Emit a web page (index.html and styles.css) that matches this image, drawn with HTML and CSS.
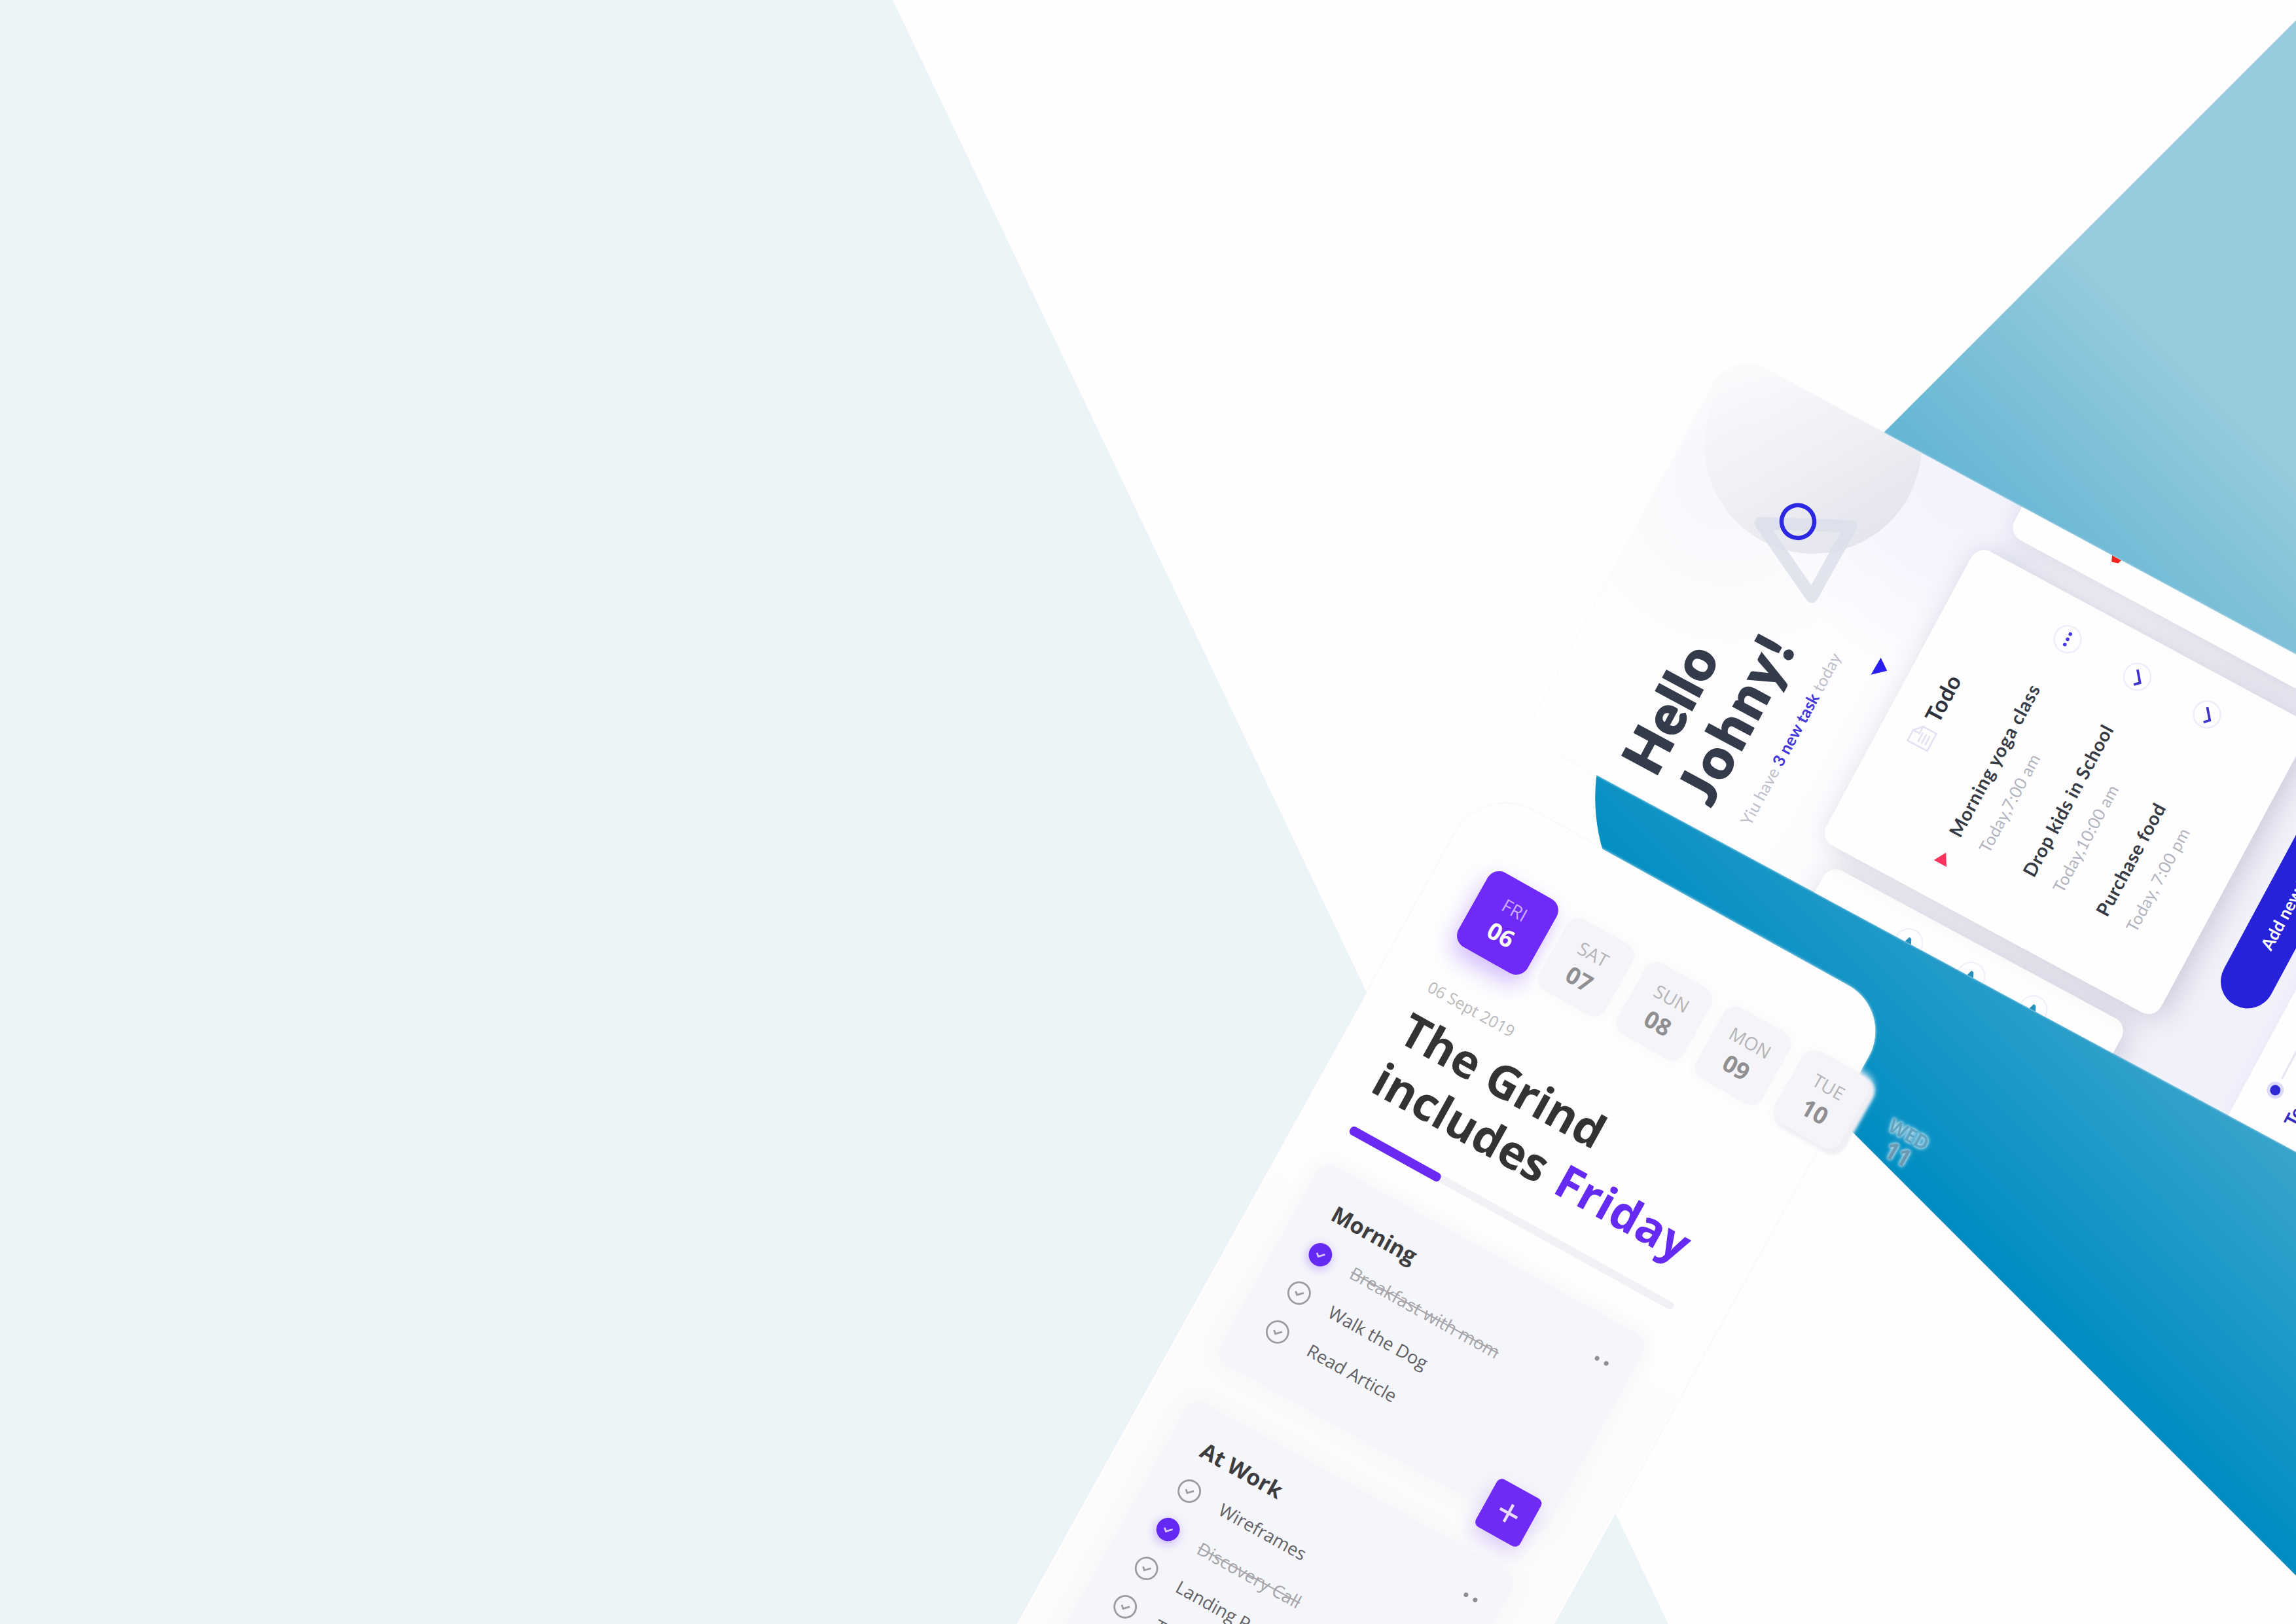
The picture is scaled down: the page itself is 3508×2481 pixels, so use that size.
FILE: index.html
```html
<!DOCTYPE html>
<html lang="en">
<head>
<meta charset="utf-8">
<title>Task planner</title>
<link rel="stylesheet" href="styles.css">
</head>
<body>
<main class="stage">
  <svg class="backdrop" viewBox="0 0 3508 2481" aria-hidden="true">
    <defs>
      <linearGradient id="sea" gradientUnits="userSpaceOnUse" x1="1118" y1="0" x2="1957" y2="-839">
        <stop offset="0" stop-color="#008dc2"/>
        <stop offset="1" stop-color="#98cbdd"/>
      </linearGradient>
    </defs>
    <path fill="#ebf4f7" d="M0 0H1364L2549 2481H0Z"/>
    <path fill="url(#sea)" d="M3508 31L2520 1019A283 283 0 0 0 2520 1419L3508 2407Z"/>
  </svg>

  <section class="phone hello">
    <div class="orb"></div>
    <svg class="shapes" viewBox="0 0 665 460" aria-hidden="true">
      <path d="M455 164L516 288L393 286Z" fill="none" stroke="#dcdfea" stroke-opacity=".85" stroke-width="19" stroke-linejoin="round"/>
      <circle cx="484" cy="213" r="25" fill="none" stroke="#2c27e0" stroke-width="6.5"/>
      <path d="M331 422L361 423L348 441Z" fill="#2a1ff0"/>
    </svg>
    <h1 class="greeting">Hello<br><span class="name">Johny!</span></h1>
    <p class="summary">Yiu have <b>3 new task</b> today</p>

    <div class="deck">
      <article class="sheet side prev">
        <i class="ring"></i><i class="ring"></i><i class="ring"></i>
      </article>
      <article class="sheet todo">
        <header class="todo-head">
          <svg class="doc" viewBox="0 0 34 38" aria-hidden="true">
            <path d="M2 2H20L32 13V36H2Z M20 2V13H32 M8 17H24 M8 23H24 M8 29H24" fill="none" stroke="#e2e2f3" stroke-width="2.6"/>
          </svg>
          <h2>Todo</h2>
        </header>
        <div class="todo-body">
          <ul class="tasks">
            <li>
              <svg class="flag" viewBox="0 0 20 24" aria-hidden="true"><path d="M0 1L19 12L0 23Z" fill="#f8345f"/></svg>
              <strong>Morning yoga class</strong><span class="time">Today,7:00 am</span>
            </li>
            <li><strong>Drop kids in School</strong><span class="time">Today,10:00 am</span></li>
            <li><strong>Purchase food</strong><span class="time">Today, 7:00 pm</span></li>
          </ul>
          <div class="marks">
            <svg viewBox="-22 -22 44 44"><circle r="20.5"/><g class="dot"><circle cx="-9" r="2.8"/><circle r="2.8"/><circle cx="9" r="2.8"/></g></svg>
            <svg viewBox="-22 -22 44 44"><circle r="20.5"/><path d="M-13 1L-6 8L10 -5"/></svg>
            <svg viewBox="-22 -22 44 44"><circle r="20.5"/><path d="M-13 1L-6 8L10 -5"/></svg>
          </div>
        </div>
      </article>
      <article class="sheet side next">
        <svg class="alert" viewBox="0 0 16 20" aria-hidden="true"><path d="M0 6L12 1V19L3 16Z" fill="#f5221b"/></svg>
      </article>
    </div>

    <button class="add">Add new task</button>
    <footer class="timeline">
      <div class="track"><i class="point"></i><i class="line"></i></div>
      <span class="label">Today</span>
    </footer>
  </section>

  <section class="phone grind">
    <nav class="days">
      <div class="day active"><span>FRI</span><b>06</b></div>
      <div class="day"><span>SAT</span><b>07</b></div>
      <div class="day"><span>SUN</span><b>08</b></div>
      <div class="day"><span>MON</span><b>09</b></div>
      <div class="day last"><span>TUE</span><b>10</b></div>
      <div class="day ghost"><span>WED</span><b>11</b></div>
    </nav>
    <p class="date">06 Sept 2019</p>
    <h1 class="headline">The Grind<br>includes <em>Friday</em></h1>
    <div class="progress"><div class="bar"></div></div>

    <article class="group">
      <header><h2>Morning</h2><span class="more"><i></i><i></i></span></header>
      <ul>
        <li class="done"><svg viewBox="-18 -18 36 36"><circle r="16.5"/><path d="M-6 0L-1.5 4L6 -3.5"/></svg><span>Breakfast with mom</span></li>
        <li><svg viewBox="-18 -18 36 36"><circle r="16.5"/><path d="M-6 0L-1.5 4L6 -3.5"/></svg><span>Walk the Dog</span></li>
        <li><svg viewBox="-18 -18 36 36"><circle r="16.5"/><path d="M-6 0L-1.5 4L6 -3.5"/></svg><span>Read Article</span></li>
      </ul>
    </article>
    <article class="group">
      <header><h2>At Work</h2><span class="more"><i></i><i></i></span></header>
      <ul>
        <li><svg viewBox="-18 -18 36 36"><circle r="16.5"/><path d="M-6 0L-1.5 4L6 -3.5"/></svg><span>Wireframes</span></li>
        <li class="done"><svg viewBox="-18 -18 36 36"><circle r="16.5"/><path d="M-6 0L-1.5 4L6 -3.5"/></svg><span>Discovery Call</span></li>
        <li><svg viewBox="-18 -18 36 36"><circle r="16.5"/><path d="M-6 0L-1.5 4L6 -3.5"/></svg><span>Landing Page</span></li>
        <li><svg viewBox="-18 -18 36 36"><circle r="16.5"/><path d="M-6 0L-1.5 4L6 -3.5"/></svg><span>Team</span></li>
      </ul>
    </article>
    <button class="plus" aria-label="Add"><svg viewBox="0 0 36 36"><path d="M18 3V33M3 18H33"/></svg></button>
  </section>
</main>
</body>
</html>
```
FILE: styles.css
```css
* { box-sizing: border-box; margin: 0; padding: 0; }

body { background: #fefefe; }

ul { list-style: none; }

button { border: 0; font: inherit; }

.stage {
  position: relative;
  width: 3508px;
  height: 2481px;
  overflow: hidden;
}

.backdrop { display: block; width: 3508px; height: 2481px; }

.phone { position: absolute; transform-origin: 0 0; }

/* Greeting screen, turned counter-clockwise */
.hello {
  left: 2330px;
  top: 1122px;
  width: 669px;
  height: 1500px;
  padding: 127px 0 0 3px;
  overflow: hidden;
  transform: rotate(-61.7deg) translateX(-3px);
  border-radius: 30px 60px 0 0;
  font-family: Lato, "Liberation Sans", sans-serif;
  background:
    radial-gradient(circle at 660px 400px, #f2f3fd 0, rgba(242, 243, 253, .85) 110px, rgba(242, 243, 253, 0) 300px),
    radial-gradient(circle at 500px 80px, #f7f7fc 0, rgba(248, 248, 253, 0) 280px),
    linear-gradient(180deg, #fefefe 0, #fdfdff 420px, #f8f8fd 700px, #f1f1fa 1060px, #f2f2fd 1200px);
  box-shadow: 0 0 3px #f0f1fa;
}

.orb {
  position: absolute;
  left: 435px;
  top: 12px;
  width: 332px;
  height: 332px;
  border-radius: 50%;
  background: linear-gradient(212deg, rgba(246, 246, 250, 0) 16%, #f2f2f6 46%, #e2e3ec 92%);
}

.shapes { position: absolute; left: 3px; top: 0; width: 665px; height: 460px; }

.greeting {
  position: relative;
  padding-left: 36px;
  font-size: 84px;
  font-weight: 900;
  line-height: 95.5px;
  letter-spacing: 2px;
  color: #343c4b;
  -webkit-text-stroke: 2.5px #343c4b;
}

.name { letter-spacing: 5.6px; }

.summary {
  position: relative;
  margin: 27px 0 97px 39px;
  font-size: 25px;
  line-height: 30px;
  letter-spacing: .25px;
  color: #bdc0ca;
  white-space: nowrap;
}

.summary b { color: #4336dc; }

.deck {
  display: flex;
  align-items: center;
  width: 1594px;
  height: 581px;
  margin-left: -464px;
}

.sheet {
  flex: none;
  width: 510px;
  background: #fefefe;
  border-radius: 22px;
}

.side {
  height: 518px;
  box-shadow: 0 8px 44px rgba(70, 70, 110, .22);
}

.prev {
  display: flex;
  flex-direction: column;
  align-items: flex-end;
  gap: 64px;
  padding: 141px 26px 0 0;
}

.ring {
  display: flex;
  align-items: center;
  justify-content: flex-end;
  width: 44px;
  height: 44px;
  padding-right: 12px;
  border: 2px solid #f0eff9;
  border-radius: 50%;
}

/* Corner of the check mark that peeks past the screen edge */
.ring::after {
  content: "";
  width: 12px;
  height: 13px;
  background: #2590bb;
  clip-path: polygon(0 0, 100% 30%, 90% 60%, 0 100%);
}

.next { padding: 154px 0 0 37px; }

.alert { display: block; width: 16px; height: 20px; }

.todo {
  position: relative;
  height: 581px;
  margin: 0 37px 0 27px;
  padding-top: 44px;
  box-shadow: 0 10px 44px rgba(60, 60, 100, .22);
}

.next { position: relative; }

.todo-head { display: flex; align-items: center; gap: 12px; padding-left: 194px; }

.doc { width: 34px; height: 38px; }

.todo-head h2 { font-size: 34px; line-height: 40px; color: #2c313c; letter-spacing: .5px; }

.todo-body { display: flex; justify-content: space-between; padding: 77px 40px 0 102px; }

.tasks li { position: relative; height: 127.5px; white-space: nowrap; }

.tasks strong {
  display: block;
  font-size: 28.5px;
  line-height: 34px;
  letter-spacing: .75px;
  color: #363b46;
}

.tasks li:first-child strong { letter-spacing: 1.05px; }

.time {
  display: block;
  margin-top: 18px;
  font-size: 25.5px;
  line-height: 32px;
  letter-spacing: .4px;
  color: #b3b5be;
}

.flag { position: absolute; left: -48px; top: 7px; width: 20px; height: 24px; }

.marks { display: flex; flex-direction: column; gap: 77px; padding-top: 6px; }

.marks svg { width: 44px; height: 44px; fill: none; stroke: #f0ecfa; stroke-width: 2.5; }

.marks path { stroke: #4034cc; stroke-width: 3.8; }

.marks .dot { fill: #4438dc; stroke: none; }

.add {
  display: block;
  width: 400px;
  height: 82px;
  margin: 57px 0 0 150px;
  padding-left: 98px;
  border-radius: 41px;
  background: #2721d9;
  color: #fff;
  font-size: 26px;
  font-weight: 700;
  text-align: left;
}

.timeline {
  height: 300px;
  margin: 30px 0 0 -3px;
  padding: 37px 0 0 31px;
  background: #fefefe;
  box-shadow: 0 0 30px rgba(60, 60, 100, .06);
}

.track { display: flex; align-items: center; gap: 12px; padding-left: 29px; }

.point {
  width: 16px;
  height: 16px;
  border-radius: 50%;
  background: #3029d6;
  box-shadow: 0 0 0 5px #dcdcfa;
}

.line { width: 400px; height: 3px; background: #e6e6f2; }

.label { display: block; margin-top: 18px; font-size: 29px; font-weight: 700; color: #352bc0; }

/* Day planner screen, turned clockwise */
.grind {
  left: 2266px;
  top: 1196px;
  width: 718px;
  height: 1700px;
  padding: 107px 0 0 78px;
  transform: rotate(29deg);
  border-radius: 88px 80px 0 0;
  font-family: "Open Sans", "Noto Sans", sans-serif;
  background: linear-gradient(180deg, #fefefe 0, #fefefe 560px, #fbfbfb 900px, #fbfbfa 1700px);
  box-shadow: inset 0 0 0 3px #fefefe, 0 0 4px #eef1f6;
}

.days { display: flex; gap: 22.6px; transform: rotate(.4deg); transform-origin: 60px 60px; }

.day {
  flex: none;
  display: flex;
  flex-direction: column;
  align-items: center;
  width: 115px;
  height: 124px;
  padding-top: 20px;
  border-radius: 20px;
  background: #f5f5f9;
  box-shadow: 0 0 12px 6px #fafafc;
  color: #b4b4b6;
}

.day span { font-size: 28px; line-height: 38px; }

.day b { font-size: 36px; line-height: 50px; color: #8f8f92; }

.day.active {
  width: 121px;
  height: 130px;
  margin: -3px -3px -3px -2px;
  padding-top: 23px;
  background: #702af8;
  color: #c9a9ff;
  box-shadow: 0 16px 34px rgba(112, 42, 248, .3);
}

.day.active b { color: #fff; }

.day.last { box-shadow: 7px 2px 4px 3px #efeff4, 0 0 12px 6px #fafafc; }

.day.ghost {
  margin-left: 5px;
  background: none;
  box-shadow: none;
  color: #5fa3c1;
  filter: blur(.7px);
  text-shadow: 0 0 4px #c2e2ee, 0 0 4px #b5dbe9, 0 0 8px #9dcfe2;
}

.day.ghost span { font-size: 29px; font-weight: 700; line-height: 44px; }

.day.ghost b { font-size: 35px; line-height: 26px; color: #6b9ab0; }

.date { margin-top: 65px; font-size: 24.5px; line-height: 30px; color: #b9b9bb; }

.headline {
  margin: 12px 0 0 -3px;
  font-size: 71px;
  font-weight: 700;
  line-height: 87px;
  color: #333335;
  white-space: nowrap;
}

.headline em { margin-left: 5px; font-style: normal; letter-spacing: .5px; color: #652bf2; }

.progress {
  width: 564px;
  height: 12px;
  margin: 42px 0 0 1px;
  border-radius: 6px;
  background: #f0f0f5;
}

.bar { width: 157px; height: 14px; border-radius: 6px; background: #6a2af4; }

.group {
  width: 570px;
  height: 346px;
  margin: 56px 0 0 -12px;
  padding: 42px 38px 0 48px;
  border-radius: 24px;
  background: #f5f6fa;
  box-shadow: 0 0 26px 6px #f7f7fa;
}

.group + .group { height: 480px; margin-top: 67px; }

.group header { display: flex; justify-content: space-between; align-items: center; height: 40px; padding-left: 4px; }

.group h2 { font-size: 34px; line-height: 40px; color: #3d3d40; }

.more { display: flex; gap: 9px; }

.more i { width: 7px; height: 7px; border-radius: 50%; background: #8d8d92; }

.group ul { padding-top: 13px; }

.group li { display: flex; align-items: center; gap: 36px; height: 67.5px; font-size: 27.4px; color: #626266; }

.group li svg { width: 36px; height: 36px; overflow: visible; fill: none; stroke: #9c9ca0; stroke-width: 2.8; }

.group li.done { color: #a5a5a9; text-decoration: line-through; }

.group li.done svg {
  fill: #6429f2;
  stroke: #6429f2;
  border-radius: 50%;
  box-shadow: 0 4px 16px rgba(112, 42, 248, .35);
}

.group li.done path { fill: none; stroke: #d9c8ff; }

.plus {
  position: absolute;
  left: 536px;
  top: 915px;
  display: grid;
  place-items: center;
  width: 77px;
  height: 83px;
  border-radius: 9px;
  background: #6f2af6;
  box-shadow: 0 12px 28px rgba(112, 42, 248, .22);
}

.plus svg { width: 36px; height: 36px; fill: none; stroke: #e8dcff; stroke-width: 4.5; }
```
